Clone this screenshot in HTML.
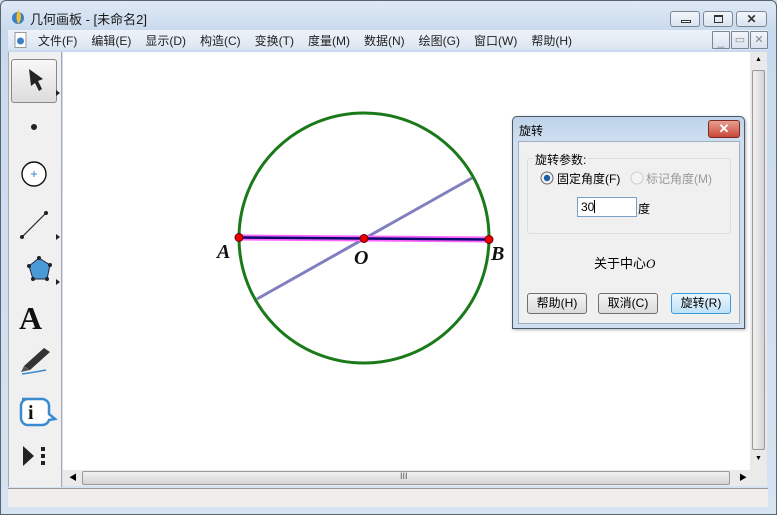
<!DOCTYPE html>
<html><head><meta charset="utf-8"><style>
*{margin:0;padding:0;box-sizing:border-box}
body{width:777px;height:515px;overflow:hidden;font-family:"Liberation Sans","Noto Sans CJK SC",sans-serif;font-size:12px;color:#000;position:relative;background:#cfdded}
.abs{position:absolute}
#win{left:0;top:0;width:777px;height:515px;border:1px solid #5a6470;border-radius:6px 6px 0 0;background:linear-gradient(#dfe9f5,#c9daee 30px,#d6e3f1);}
.tb{font-size:13px;color:#1a1a1a}
.cbtn{border:1px solid #7b8796;border-radius:3px;background:linear-gradient(#f2f6fb,#d9e3ef);}
.menu span{margin-right:14px}
.btn{border:1px solid #707070;border-radius:3px;background:linear-gradient(#f4f4f4,#dcdcdc);text-align:center;line-height:19px;font-size:12px}
</style></head><body>
<div id="win" class="abs"></div>
<svg class="abs" style="left:10px;top:9px" width="16" height="16"><circle cx="8" cy="9" r="6" fill="#3a7fc8"/><path d="M8 1 C12 5 12 11 8 15 C6 10 6 6 8 1Z" fill="#f5c030"/></svg>
<div class="abs tb" style="left:30px;top:9px">几何画板 - [未命名2]</div>
<div class="abs cbtn" style="left:670px;top:11px;width:30px;height:16px"><div class="abs" style="left:10px;top:8px;width:10px;height:3px;border:1px solid #333;background:#fff"></div></div>
<div class="abs cbtn" style="left:703px;top:11px;width:30px;height:16px"><div class="abs" style="left:10px;top:3px;width:9px;height:8px;border:1px solid #333;border-top-width:2px"></div></div>
<div class="abs cbtn" style="left:736px;top:11px;width:31px;height:16px;text-align:center;font-size:12px;line-height:14px;font-weight:bold;color:#333">✕</div>
<div class="abs" style="left:8px;top:30px;width:760px;height:20px;background:linear-gradient(#eef3f9,#dbe5f1)"></div>
<svg class="abs" style="left:14px;top:32px" width="14" height="16"><rect x="1" y="0.5" width="11" height="15" fill="#fff" stroke="#999"/><circle cx="6.5" cy="9" r="3.5" fill="#3a7fc8"/></svg>
<div class="abs menu" style="left:38px;top:32px;color:#222;white-space:nowrap"><span>文件(F)</span><span>编辑(E)</span><span>显示(D)</span><span>构造(C)</span><span>变换(T)</span><span>度量(M)</span><span>数据(N)</span><span>绘图(G)</span><span>窗口(W)</span><span>帮助(H)</span></div>
<div class="abs cbtn" style="left:712px;top:31px;width:18px;height:18px;border-radius:1px;color:#888;text-align:center;line-height:18px">_</div>
<div class="abs cbtn" style="left:731px;top:31px;width:18px;height:18px;border-radius:1px;color:#888;text-align:center;line-height:16px;font-size:11px">▭</div>
<div class="abs cbtn" style="left:750px;top:31px;width:18px;height:18px;border-radius:1px;color:#888;text-align:center;line-height:17px;font-size:11px">✕</div>
<div class="abs" style="left:8px;top:52px;width:54px;height:435px;background:#f0f0f0;border-right:1px solid #aaa;border-left:1px solid #aaa"></div>
<div class="abs" style="left:11px;top:59px;width:46px;height:44px;border:1px solid #888;border-radius:3px;background:linear-gradient(#f8f8f8,#dcdcdc)"></div>
<svg class="abs" style="left:8px;top:52px" width="54" height="435">
<path d="M21 17 L35 27 L30 29 L34 37 L31 39 L27 31 L23 34Z" fill="#222"/>
<path d="M48 38 L52 41 L48 44Z" fill="#222"/>
<circle cx="26" cy="75" r="3" fill="#222"/>
<circle cx="26" cy="122" r="12" fill="#fff" stroke="#111" stroke-width="1.4"/>
<path d="M23 122h6M26 119v6" stroke="#3a8ad0"/>
<path d="M14 185 L38 161" stroke="#222" stroke-width="1.2"/><circle cx="14" cy="185" r="2" fill="#222"/><circle cx="38" cy="161" r="2" fill="#222"/>
<path d="M48 182 L52 185 L48 188Z" fill="#222"/>
<path d="M31 206 L42 213 L39 227 L25 227 L21 214Z" fill="#4a9ad6" stroke="#224" stroke-width="1"/>
<circle cx="31" cy="206" r="2" fill="#222"/><circle cx="42" cy="213" r="2" fill="#222"/><circle cx="39" cy="227" r="2" fill="#222"/><circle cx="25" cy="227" r="2" fill="#222"/><circle cx="21" cy="214" r="2" fill="#222"/>
<path d="M48 227 L52 230 L48 233Z" fill="#222"/>
<text x="11" y="277" font-family="Liberation Serif" font-weight="bold" font-size="32" fill="#111">A</text>
<path d="M16 314 L36 296 L42 300 L22 318Z" fill="#333"/><path d="M16 314 L13 320 L22 318" fill="#555"/><path d="M14 322 Q28 320 38 318" stroke="#3a8ad0" stroke-width="1.5" fill="none"/>
<path d="M14 347 h20 a7 7 0 0 1 7 7 v8 l6 5 l-6 1 a7 7 0 0 1 -7 5 h-14 a7 7 0 0 1 -7 -7 v-12 a7 7 0 0 1 7 -7z" fill="#fff" stroke="#3a8ad0" stroke-width="2.5"/>
<text x="20" y="367" font-family="Liberation Serif" font-weight="bold" font-size="20" fill="#111">i</text>
<path d="M15 394 L26 404 L15 414Z" fill="#222"/><rect x="33" y="395" width="4" height="4" fill="#222"/><rect x="33" y="402" width="4" height="4" fill="#222"/><rect x="33" y="409" width="4" height="4" fill="#222"/>
</svg>
<div class="abs" style="left:63px;top:52px;width:687px;height:418px;background:#fff"></div>
<svg class="abs" style="left:0;top:0" width="777" height="515">
<circle cx="364" cy="238" r="125" fill="none" stroke="#1a7a1a" stroke-width="3"/>
<path d="M257 299 L472 178" stroke="#8080c0" stroke-width="3"/>
<path d="M239 237.5 L489 239.5" stroke="#ff66ff" stroke-width="6"/>
<path d="M239 237.5 L489 239.5" stroke="#0a0a70" stroke-width="2.5"/>
<circle cx="239" cy="237.5" r="4" fill="#e00" stroke="#600"/>
<circle cx="364" cy="238.5" r="4" fill="#e00" stroke="#600"/>
<circle cx="489" cy="239.5" r="4" fill="#e00" stroke="#600"/>
<g font-family="Liberation Serif" font-style="italic" font-weight="bold" font-size="20" fill="#111">
<text x="217" y="258">A</text><text x="354" y="264">O</text><text x="491" y="260">B</text></g>
</svg>
<div class="abs" style="left:750px;top:52px;width:17px;height:418px;background:#eaeaea"></div>
<div class="abs" style="left:752px;top:70px;width:13px;height:380px;border:1px solid #999;border-radius:2px;background:linear-gradient(90deg,#f2f2f2,#d4d4d4)"></div>
<div class="abs" style="left:755px;top:56px;font-size:7px">▲</div>
<div class="abs" style="left:755px;top:455px;font-size:7px">▼</div>
<div class="abs" style="left:63px;top:470px;width:687px;height:16px;background:#eaeaea"></div>
<div class="abs" style="left:82px;top:471px;width:648px;height:14px;border:1px solid #999;border-radius:2px;background:linear-gradient(#f2f2f2,#d4d4d4)"></div>
<div class="abs" style="left:69px;top:472px;font-size:8px">◀</div>
<div class="abs" style="left:739px;top:472px;font-size:8px">▶</div>
<div class="abs" style="left:400px;top:471px;font-size:9px;color:#555">III</div>
<div class="abs" style="left:750px;top:470px;width:17px;height:16px;background:#eaeaea"></div>
<div class="abs" style="left:8px;top:488px;width:760px;height:19px;background:#f0eded;border-top:1px solid #999"></div>
<div class="abs" style="left:512px;top:116px;width:233px;height:213px;border:1px solid #4a5868;border-radius:5px 5px 0 0;background:linear-gradient(#bdd3ea,#cfdff0 25px,#cfdff0);box-shadow:1px 1px 3px rgba(0,0,0,.3)"></div>
<div class="abs" style="left:519px;top:122px;font-size:12px">旋转</div>
<div class="abs" style="left:708px;top:120px;width:32px;height:18px;border:1px solid #7a2a22;border-radius:3px;background:linear-gradient(#e8a090,#c8483a);color:#fff;font-weight:bold;text-align:center;line-height:16px;font-size:13px">✕</div>
<div class="abs" style="left:518px;top:141px;width:222px;height:183px;background:#f0f0f0;border:1px solid #a0b0c0"></div>
<div class="abs" style="left:527px;top:158px;width:204px;height:76px;border:1px solid #d5dfe5;border-radius:3px"></div>
<div class="abs" style="left:533px;top:151px;background:#f0f0f0;padding:0 2px">旋转参数:</div>
<svg class="abs" style="left:540px;top:171px" width="14" height="14"><circle cx="7" cy="7" r="6" fill="#f4f4f4" stroke="#666"/><circle cx="7" cy="7" r="3.2" fill="#1e5fa8"/></svg>
<div class="abs" style="left:557px;top:170px">固定角度(F)</div>
<svg class="abs" style="left:630px;top:171px" width="14" height="14"><circle cx="7" cy="7" r="6" fill="#f4f4f4" stroke="#ccc"/></svg>
<div class="abs" style="left:646px;top:170px;color:#999">标记角度(M)</div>
<div class="abs" style="left:577px;top:197px;width:60px;height:20px;background:#fff;border:1px solid #7aa0c8;padding-left:3px;line-height:18px">30<span style="display:inline-block;width:1px;height:13px;background:#000;vertical-align:-2px"></span></div>
<div class="abs" style="left:638px;top:200px">度</div>
<div class="abs" style="left:594px;top:253px;font-size:13px">关于中心<i style="font-family:'Liberation Serif'">O</i></div>
<div class="abs btn" style="left:527px;top:293px;width:60px;height:21px">帮助(H)</div>
<div class="abs btn" style="left:598px;top:293px;width:60px;height:21px">取消(C)</div>
<div class="abs btn" style="left:671px;top:293px;width:60px;height:21px;border-color:#3c9ad8;background:linear-gradient(#eaf6fd,#bfe2f7)">旋转(R)</div>
</body></html>
